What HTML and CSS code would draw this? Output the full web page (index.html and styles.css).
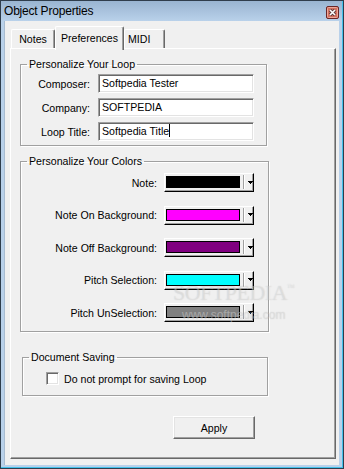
FILE: index.html
```html
<!DOCTYPE html>
<html lang="en">

<head>
	<meta charset="UTF-8">
	<title>Object Properties</title>
	<link rel="stylesheet" href="styles.css">
</head>

<body>
	<div class="window">
		<div class="titlebar">
			<span class="title">Object Properties</span>
			<span class="close">
				<svg width="13" height="13" viewBox="0 0 13 13">
					<rect x="0.5" y="0.5" width="12" height="12" rx="1.5" fill="#d4705f" stroke="#6a2626"/>
					<rect x="1.5" y="1.5" width="10" height="10" rx="1" fill="none" stroke="#eca89a"/>
					<path d="M4 4L9 9M9 4L4 9" stroke="#5a3a3a" stroke-width="3.2"/>
					<path d="M4 4L9 9M9 4L4 9" stroke="#fff" stroke-width="1.6"/>
				</svg>
			</span>
		</div>
		<div class="frame">
			<div class="client">
				<div class="tabs">
					<div class="tab tab-notes">Notes</div>
					<div class="tab tab-prefs active">Preferences</div>
					<div class="tab tab-midi">MIDI</div>
				</div>
				<div class="panel">
					<fieldset class="group group-loop">
						<legend>Personalize Your Loop</legend>
						<div class="row">
							<label>Composer:</label>
							<div class="field">Softpedia Tester</div>
						</div>
						<div class="row">
							<label>Company:</label>
							<div class="field">SOFTPEDIA</div>
						</div>
						<div class="row">
							<label>Loop Title:</label>
							<div class="field">Softpedia Title<span class="caret"></span></div>
						</div>
					</fieldset>

					<fieldset class="group group-colors">
						<legend>Personalize Your Colors</legend>
						<div class="crow">
							<label>Note:</label>
							<div class="combo"><span class="swatch c-note"></span><span class="sep"></span><svg class="arrow" width="5" height="3"><path d="M0 0h5v1h-1v1h-1v1h-1v-1h-1v-1h-1z"/></svg></div>
						</div>
						<div class="crow">
							<label>Note On Background:</label>
							<div class="combo"><span class="swatch c-on"></span><span class="sep"></span><svg class="arrow" width="5" height="3"><path d="M0 0h5v1h-1v1h-1v1h-1v-1h-1v-1h-1z"/></svg></div>
						</div>
						<div class="crow">
							<label>Note Off Background:</label>
							<div class="combo"><span class="swatch c-off"></span><span class="sep"></span><svg class="arrow" width="5" height="3"><path d="M0 0h5v1h-1v1h-1v1h-1v-1h-1v-1h-1z"/></svg></div>
						</div>
						<div class="crow">
							<label>Pitch Selection:</label>
							<div class="combo"><span class="swatch c-sel"></span><span class="sep"></span><svg class="arrow" width="5" height="3"><path d="M0 0h5v1h-1v1h-1v1h-1v-1h-1v-1h-1z"/></svg></div>
						</div>
						<div class="crow">
							<label>Pitch UnSelection:</label>
							<div class="combo"><span class="swatch c-unsel"></span><span class="sep"></span><svg class="arrow" width="5" height="3"><path d="M0 0h5v1h-1v1h-1v1h-1v-1h-1v-1h-1z"/></svg></div>
						</div>
					</fieldset>

					<fieldset class="group group-saving">
						<legend>Document Saving</legend>
						<div class="check-row">
							<span class="checkbox"></span>
							<span>Do not prompt for saving Loop</span>
						</div>
					</fieldset>

					<div class="actions">
						<button class="btn">Apply</button>
					</div>
				</div>
			</div>
		</div>
		<div class="watermark">
			<div class="wm-big">SOFTPEDIA<sup>™</sup></div>
			<div class="wm-small">www.softpedia.com</div>
		</div>
	</div>
</body>

</html>
```

FILE: styles.css
```css
* {
	box-sizing: border-box;
}

html,
body {
	margin: 0;
	background: #f0f0f0;
}

body {
	font-family: "Liberation Sans", Arial, sans-serif;
	font-size: 10.6px;
	color: #000;
}

.window {
	position: relative;
	width: 344px;
	height: 469px;
	border: 1px solid #2f3d4c;
	background: #b9d1ea;
	display: flex;
	flex-direction: column;
	overflow: hidden;
}

.titlebar {
	height: 20px;
	flex: none;
	display: flex;
	align-items: center;
	justify-content: space-between;
	padding: 0 4px 0 3px;
	background: linear-gradient(#99b4d1, #b9d1ea);
	box-shadow: inset -1px 0 0 #44c0ea;
}

.title {
	font-size: 12px;
	letter-spacing: -0.2px;
}

.close {
	display: flex;
	width: 13px;
	height: 13px;
	margin-top: 2px;
}

.frame {
	flex: 1;
	padding: 0 4px 3px 3px;
	display: flex;
	box-shadow: inset -1px -1px 0 #44c0ea;
}

.client {
	flex: 1;
	background: #f0f0f0;
	padding: 5px 0 0 5px;
	border-left: 1px solid #a9bcd0;
}

/* tabs */

.tabs {
	display: flex;
	align-items: flex-end;
	height: 22px;
}

.tab {
	position: relative;
	height: 19px;
	display: flex;
	align-items: center;
	justify-content: center;
	background: #f0f0f0;
	border: 1px solid #fff;
	border-right-color: #696969;
	border-bottom: none;
	border-radius: 2px 2px 0 0;
	box-shadow: inset -1px 0 0 #a0a0a0;
}

.tab-notes {
	width: 44px;
	margin-left: 1px;
}

.tab-prefs {
	width: 69px;
}

.tab-midi {
	width: 41px;
	justify-content: flex-start;
	padding-left: 3px;
}

.tab.active {
	height: 24px;
	margin-bottom: -2px;
	z-index: 1;
	padding-bottom: 2px;
}

.panel {
	width: 326px;
	height: 411px;
	border: 1px solid #fff;
	border-right-color: #696969;
	border-bottom-color: #696969;
	box-shadow: inset -1px -1px 0 #a0a0a0;
	padding: 9px 0 0 9px;
}

/* groups */

.group {
	margin: 0;
	padding: 0;
	min-width: 0;
	border: 1px solid #a0a0a0;
	box-shadow: inset 1px 1px 0 #fff, 1px 1px 0 #fff;
}

.group legend {
	padding: 0 2px;
	margin-left: 6px;
	line-height: 13px;
}

.group-loop {
	width: 247px;
	padding: 3px 0 4px 0;
}

.row {
	display: flex;
	align-items: center;
	height: 19px;
	margin-bottom: 5px;
}

.row:last-child {
	margin-bottom: 0;
}

.row label {
	width: 69px;
	text-align: right;
	margin-right: 8px;
}

.field {
	width: 156px;
	height: 19px;
	background: #fff;
	border: 1px solid #a0a0a0;
	border-right-color: #fff;
	border-bottom-color: #fff;
	box-shadow: inset 1px 1px 0 #696969, inset -1px -1px 0 #e3e3e3;
	padding: 0 3px;
	line-height: 17px;
	white-space: nowrap;
}

.caret {
	display: inline-block;
	width: 1px;
	height: 13px;
	background: #000;
	vertical-align: -2px;
}

.group-colors {
	width: 249px;
	margin-top: 9px;
	padding: 5px 0 9px 0;
}

.crow {
	display: flex;
	align-items: center;
	height: 19px;
	margin-bottom: 13.5px;
}

.crow:last-child {
	margin-bottom: 0;
}

.crow label {
	width: 136px;
	text-align: right;
	margin-right: 7px;
}

.combo {
	width: 90px;
	height: 19px;
	display: flex;
	align-items: center;
	border: 1px solid #fff;
	border-right-color: #000;
	border-bottom-color: #000;
	box-shadow: inset -1px -1px 0 #a0a0a0;
	padding: 0 0 1px 1px;
}

.swatch {
	width: 74px;
	height: 12px;
	border: 1px solid #000;
}

.c-note {
	background: #000;
}

.c-on {
	background: #ff00ff;
}

.c-off {
	background: #800080;
}

.c-sel {
	background: #00ffff;
}

.c-unsel {
	background: #808080;
}

.sep {
	width: 1px;
	height: 14px;
	margin-left: 3px;
	background: #a0a0a0;
	box-shadow: 1px 0 0 #fff;
}

.arrow {
	margin-left: 4px;
}

.group-saving {
	width: 246px;
	margin: 19px 0 0 2px;
	padding: 8px 0 10px 0;
}

.check-row {
	display: flex;
	align-items: center;
	height: 13px;
	padding-left: 23px;
}

.checkbox {
	width: 13px;
	height: 13px;
	margin-right: 5px;
	background: #fff;
	border: 1px solid #a0a0a0;
	border-right-color: #fff;
	border-bottom-color: #fff;
	box-shadow: inset 1px 1px 0 #696969, inset -1px -1px 0 #e3e3e3;
}

.actions {
	margin: 20px 0 0 153px;
}

.btn {
	width: 82px;
	height: 23px;
	font: inherit;
	color: #000;
	background: #f0f0f0;
	border: 1px solid #fff;
	border-right-color: #696969;
	border-bottom-color: #696969;
	box-shadow: inset -1px -1px 0 #a0a0a0, inset 1px 1px 0 #e3e3e3;
	padding: 0;
}

/* watermark */

.watermark {
	position: absolute;
	left: 172px;
	top: 274px;
	pointer-events: none;
	color: rgba(255, 255, 255, 0.3);
	text-shadow: 0 0 1px rgba(120, 120, 120, 0.3);
}

.wm-big {
	font-family: "Liberation Serif", serif;
	font-size: 22px;
	line-height: 26px;
	letter-spacing: -0.5px;
}

.wm-big sup {
	font-size: 8px;
	vertical-align: 10px;
}

.wm-small {
	margin: 2px 0 0 9px;
	font-size: 12px;
	color: rgba(235, 235, 235, 0.4);
}
```
